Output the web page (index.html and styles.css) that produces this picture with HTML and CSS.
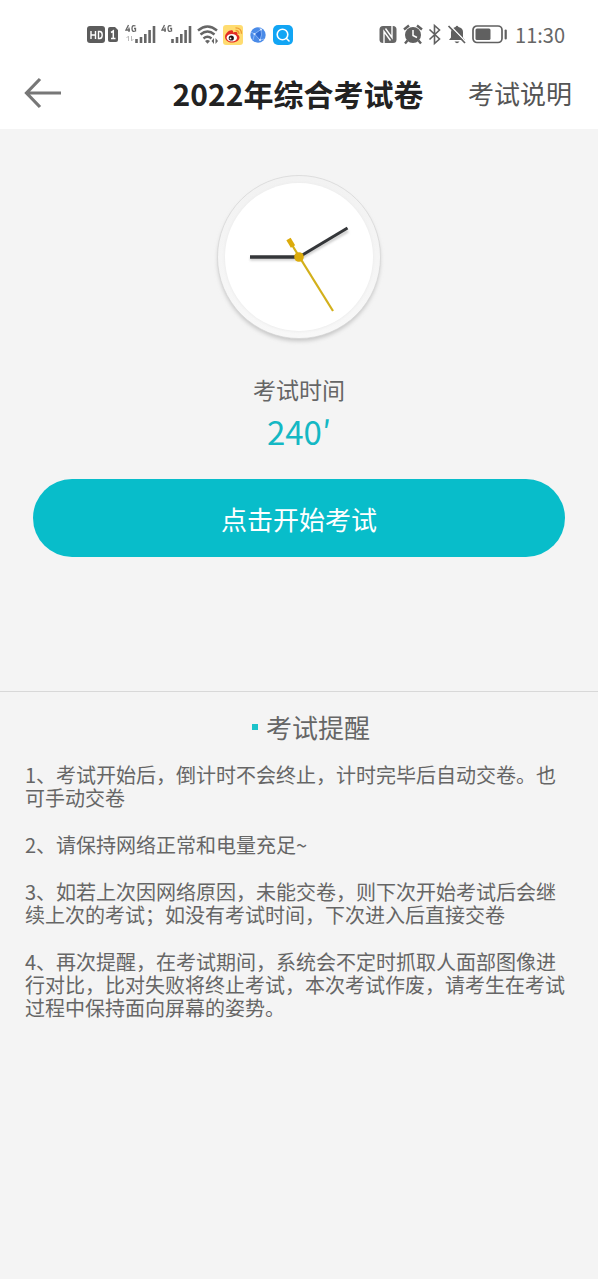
FILE: index.html
```html
<!DOCTYPE html>
<html lang="zh-CN">
<head>
<meta charset="utf-8">
<meta name="viewport" content="width=device-width, initial-scale=1">
<title>2022年综合考试卷</title>
<link rel="stylesheet" href="styles.css">
</head>
<body>
<div class="status">
  <div class="status-left">
    <svg width="33" height="24" viewBox="0 0 33 24" aria-hidden="true">
      <rect x="0" y="3" width="18" height="17" rx="3" fill="#5c5c5c"/>
      <path d="M4 8v8M8.500 8v8M4 12h4.500M11.500 8.500v7h1.200q2.500 0 2.500-3.500t-2.500-3.500z" fill="none" stroke="#fff" stroke-width="1.400"/>
      <path d="M23 4h5l3 3v10q0 2-2 2h-6q-2 0-2-2V6q0-2 2-2z" fill="#5c5c5c"/>
      <path d="M24 9.500l2.300-1.500v8M24 15.500h4.500" fill="none" stroke="#fff" stroke-width="1.500"/>
    </svg>
    <svg width="31" height="24" viewBox="0 0 31 24" aria-hidden="true">
      <path d="M3.500 2L1 7h4M4 4.500V9M10.500 3q-3.500-1.500-3.500 2.500t3.500 2.500V5.500H9" fill="none" stroke="#666" stroke-width="1.300"/>
      <path d="M3.500 13v5M1.500 15l2-2M6.500 13v5M8.500 16l-2 2" stroke="#bbb" fill="none"/>
      <path d="M11.500 16v4M16 14v6M20.300 11v9M24.600 7v13M29 3v17" stroke="#666" stroke-width="2.600"/>
    </svg>
    <svg width="31" height="24" viewBox="0 0 31 24" aria-hidden="true">
      <path d="M3.500 2L1 7h4M4 4.500V9M10.500 3q-3.500-1.500-3.500 2.500t3.500 2.500V5.500H9" fill="none" stroke="#666" stroke-width="1.300"/>
      <path d="M11.500 16v4M16 14v6M20.300 11v9M24.600 7v13M29 3v17" stroke="#666" stroke-width="2.600"/>
    </svg>
    <svg width="21" height="24" viewBox="0 0 21 24" aria-hidden="true">
      <path d="M1 7.500q9.500-8 19 0M3.500 11.500q7-6 14 0M6.500 15.500q4-3.500 8 0" fill="none" stroke="#666" stroke-width="2.400"/>
      <path d="M8 18l2.500 2.800L13 18q-2.500-1.800-5 0z" fill="#666"/>
      <path d="M17 15v6l-2.500-3zM18.500 15v6l2.500-3z" fill="#666"/>
    </svg>
    <svg width="20" height="24" viewBox="0 0 20 24" aria-hidden="true">
      <rect y="2" width="20" height="20" rx="3" fill="#ffdc70"/>
      <path d="M2 14c0-4 5-8 7.500-6.500 1 .6.500 2 .500 2s4-1.500 4.500.500c.2 1-.4 1.500-.4 1.500s2.400.5 2.400 3c0 3-4 5-7.500 5S2 17.500 2 14z" fill="#e32d24"/>
      <ellipse cx="8.800" cy="14.700" rx="5.200" ry="3.800" fill="#fff"/>
      <circle cx="8.300" cy="15" r="2.600" fill="#241414"/><circle cx="7.500" cy="15.400" r="0.900" fill="#fff"/>
      <path d="M12.500 7.500q3.500 0 3.500 3.500M12.500 4.800q6 0 6 6" fill="none" stroke="#ee9b32" stroke-width="1.300"/>
    </svg>
    <svg class="globe" width="16" height="24" viewBox="0 0 16 24" aria-hidden="true">
      <circle cx="8" cy="12" r="7.700" fill="#4a8be8"/>
      <path d="M11 6.500L4.500 11l5.500 6q2.500-5 1-10.500z" fill="#2f6ed6" stroke="#a9ccff" stroke-width="0.700"/>
      <path d="M4.500 11L1 9M4.500 11L3 17M11 6.500L9 4.500M10 17l4-1" stroke="#a9ccff" stroke-width="0.700"/>
      <circle cx="11" cy="6.500" r="1.100" fill="#d9e9ff"/><circle cx="4.500" cy="11" r="1.100" fill="#d9e9ff"/><circle cx="10" cy="17" r="1.100" fill="#d9e9ff"/>
    </svg>
    <svg width="21" height="24" viewBox="0 0 21 24" aria-hidden="true">
      <rect y="2" width="20" height="20" rx="5" fill="#12a5f4"/>
      <circle cx="9.500" cy="11.500" r="5.300" fill="none" stroke="#fff" stroke-width="1.600"/>
      <path d="M13.500 15.500l2.500 2.500" stroke="#fff" stroke-width="1.600" stroke-linecap="round"/>
    </svg>
  </div>
  <div class="status-right">
    <svg class="nfc" width="18" height="24" viewBox="0 0 18 24" aria-hidden="true">
      <rect x="0.500" y="3" width="17" height="17" rx="3.500" fill="#666"/>
      <path d="M5 20.500V8.500l6.500 9M13 2.500v12L6.500 5.500" fill="none" stroke="#fff" stroke-width="1.400"/>
    </svg>
    <svg width="20" height="24" viewBox="0 0 20 24" aria-hidden="true">
      <circle cx="10" cy="12" r="8" fill="#606060"/>
      <path d="M1 6.500l5-4M14 2.500l5 4M4.500 17.500L2 20.500M15.500 17.500l2.500 3" stroke="#606060" stroke-width="2.400"/>
      <path d="M10 7v5.500l4 2" fill="none" stroke="#fff" stroke-width="1.500"/>
    </svg>
    <svg width="14" height="24" viewBox="0 0 14 24" aria-hidden="true">
      <path d="M1.500 6.500l10 9.500-5 4.500v-18l5 4.500-10 9.500" fill="none" stroke="#606060" stroke-width="1.600"/>
    </svg>
    <svg width="20" height="24" viewBox="0 0 20 24" aria-hidden="true">
      <path d="M2 17l2-2.500V9q.5-4 4.500-5 1.500-2.500 3 0Q16 5 16 9v5.500l2 2.500zM7.500 18.500h5q-2.500 3.500-5 0z" fill="#606060"/>
      <path d="M3 2.500l16.500 17" stroke="#fff" stroke-width="1.500"/><path d="M1.500 3l16.500 17" stroke="#606060" stroke-width="1.700"/>
    </svg>
    <svg width="36" height="24" viewBox="0 0 36 24" aria-hidden="true">
      <rect x="1" y="3" width="29" height="16.500" rx="4" fill="none" stroke="#606060" stroke-width="1.700"/>
      <rect x="3.500" y="5.500" width="15" height="11.500" rx="1.500" fill="#606060"/>
      <path d="M33.700 7.500v8" stroke="#606060" stroke-width="2.200" stroke-linecap="round"/>
    </svg>
    <time class="clock-time">11:30</time>
  </div>
</div>
<header class="header">
  <button class="back" type="button" aria-label="返回">
    <svg width="40" height="32" viewBox="0 0 40 32" aria-hidden="true"><path d="M16 2L2.500 16 16 30M2.500 16H37" fill="none" stroke="#777" stroke-width="3.200"/></svg>
  </button>
  <h1 class="title">2022年综合考试卷</h1>
  <a class="help" href="#notice">考试说明</a>
</header>
<main>
  <section class="start">
    <svg width="180" height="180" viewBox="-90 -90 180 180" aria-hidden="true">
      <defs>
        <filter id="soft" x="-20%" y="-20%" width="140%" height="140%"><feGaussianBlur stdDeviation="2"/></filter>
        <filter id="edge" x="-20%" y="-20%" width="140%" height="140%"><feGaussianBlur stdDeviation="1"/></filter>
        <linearGradient id="rim" x1="0" y1="0" x2="0" y2="1"><stop offset="0" stop-color="#f2f2f2"/><stop offset="1" stop-color="#f8f8f8"/></linearGradient>
      </defs>
      <circle cy="3" r="81" fill="#c4c4c4" filter="url(#soft)"/>
      <circle r="81.500" fill="url(#rim)" stroke="#d4d4d4" stroke-width="0.700"/>
      <circle r="75" fill="#eee" filter="url(#edge)"/>
      <circle r="74" fill="#fff"/>
      <path d="M-49 2H0L49-26" fill="none" stroke="#ccc" stroke-width="3" filter="url(#edge)"/>
      <path d="M-49 0H0" stroke="#343639" stroke-width="3.400"/>
      <path d="M0 0L48.500-29" stroke="#343639" stroke-width="3"/>
      <path d="M-7-12L34 54" stroke="#d3b01b" stroke-width="2.200"/>
      <path d="M-10.500-18L-6-10.500" stroke="#dcab0b" stroke-width="5"/>
      <circle r="4.800" fill="#dcab0b"/>
    </svg>
    <p class="label">考试时间</p>
    <p class="duration">240′</p>
    <button class="begin" type="button">点击开始考试</button>
  </section>
  <section class="notice" id="notice">
    <h2 class="notice-title">考试提醒</h2>
    <p>1、考试开始后，倒计时不会终止，计时完毕后自动交卷。也可手动交卷</p>
    <p>2、请保持网络正常和电量充足~</p>
    <p>3、如若上次因网络原因，未能交卷，则下次开始考试后会继续上次的考试；如没有考试时间，下次进入后直接交卷</p>
    <p>4、再次提醒，在考试期间，系统会不定时抓取人面部图像进行对比，比对失败将终止考试，本次考试作废，请考生在考试过程中保持面向屏幕的姿势。</p>
  </section>
</main>
</body>
</html>
```
FILE: styles.css
```css
* { box-sizing: border-box; }
body {
  margin: 0;
  min-height: 100vh;
  background: #f4f4f4;
  color: #666;
  font-family: "Noto Sans CJK SC", sans-serif;
}
h1, h2, p { margin: 0; font-weight: 400; }
button { border: 0; font: inherit; cursor: pointer; }
svg { display: block; flex: none; }

.status {
  display: flex;
  justify-content: space-between;
  align-items: center;
  height: 60px;
  padding: 9px 33px 0 87px;
  background: #fff;
}
.status-left, .status-right { display: flex; align-items: center; gap: 5px; }
.globe { margin: 0 2px; }
.nfc { margin-right: 1px; }
.clock-time { margin-left: 2px; font-size: 20px; line-height: 24px; }

.header {
  display: grid;
  grid-template-columns: 1fr auto 1fr;
  align-items: center;
  height: 69px;
  padding: 0 26px 4px 24px;
  background: #fff;
}
.back { justify-self: start; padding: 0; background: none; }
.title { color: #222; font-size: 30px; font-weight: 700; line-height: 44px; }
.help { justify-self: end; color: #555; font-size: 26px; line-height: 40px; text-decoration: none; }

.start {
  display: flex;
  flex-direction: column;
  align-items: center;
  padding: 38px 33px 134px;
}
.label { margin-top: 27px; font-size: 23px; line-height: 30px; }
.duration { margin-top: 5px; color: #14b8c4; font-size: 33px; line-height: 44px; }
.begin {
  width: 100%;
  height: 78px;
  margin-top: 26px;
  border-radius: 39px;
  background: #08bdca;
  color: #fff;
  font-size: 26px;
}

.notice {
  display: flex;
  flex-direction: column;
  gap: 24px;
  padding: 15px 25px;
  border-top: 1px solid #d8d8d8;
  font-size: 20px;
  line-height: 23px;
}
.notice-title {
  display: flex;
  justify-content: center;
  align-items: center;
  gap: 8px;
  margin-bottom: -8px;
  padding-left: 24px;
  font-size: 26px;
  line-height: 40px;
}
.notice-title::before { content: ""; width: 6px; height: 6px; background: #1cc3ca; }
```
